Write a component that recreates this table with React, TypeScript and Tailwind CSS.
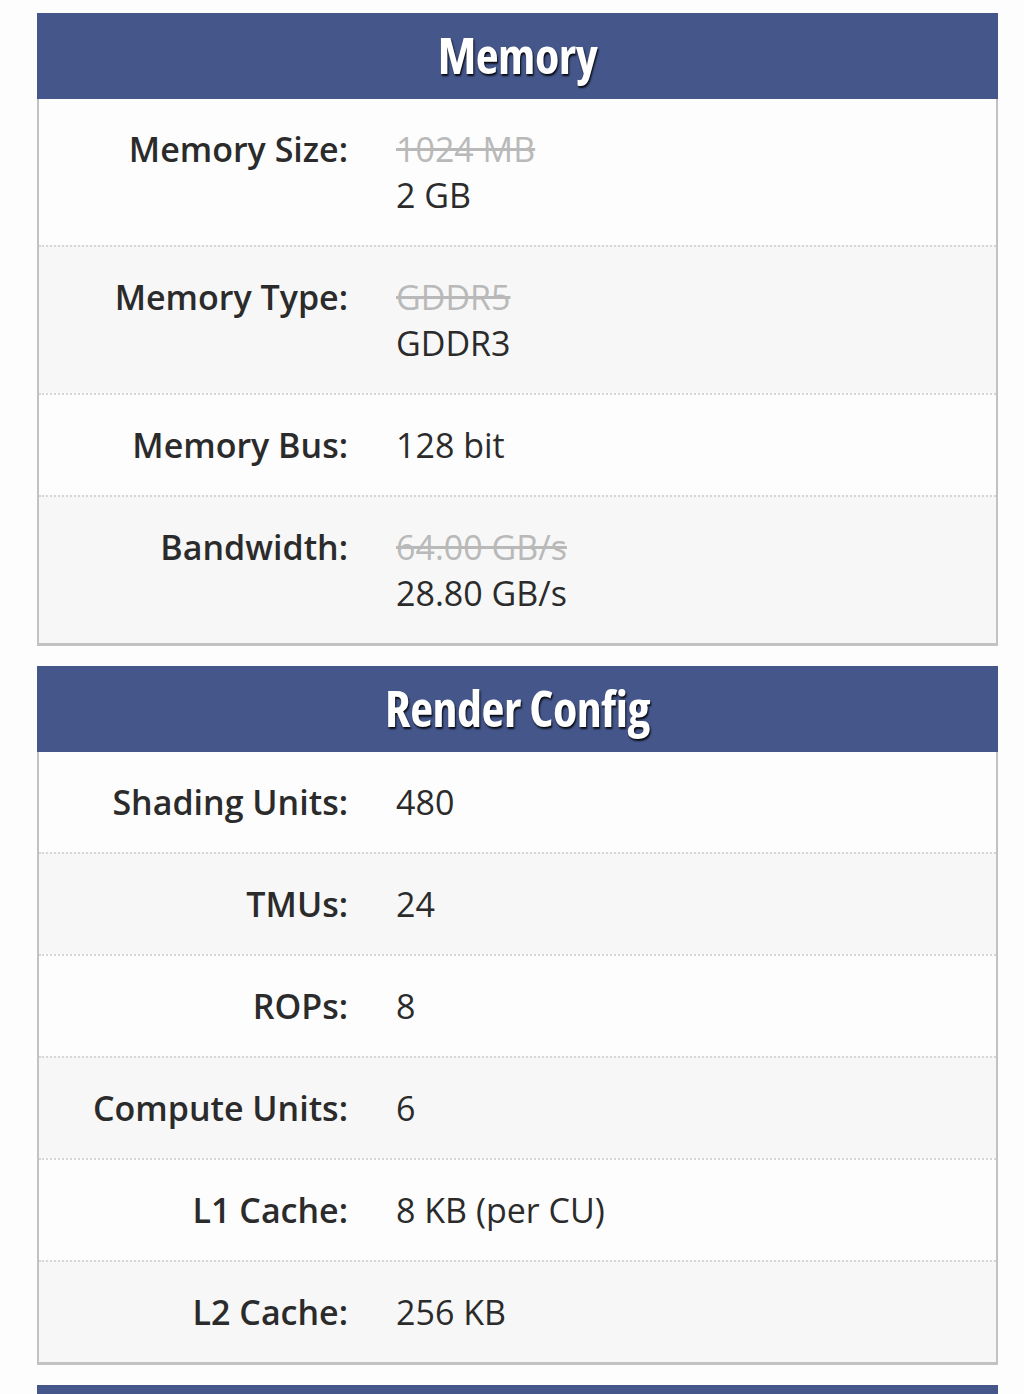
import React from "react";

type Row = { label: string; old?: string; value: string };

const memory: Row[] = [
  { label: "Memory Size:", old: "1024 MB", value: "2 GB" },
  { label: "Memory Type:", old: "GDDR5", value: "GDDR3" },
  { label: "Memory Bus:", value: "128 bit" },
  { label: "Bandwidth:", old: "64.00 GB/s", value: "28.80 GB/s" },
];

const render: Row[] = [
  { label: "Shading Units:", value: "480" },
  { label: "TMUs:", value: "24" },
  { label: "ROPs:", value: "8" },
  { label: "Compute Units:", value: "6" },
  { label: "L1 Cache:", value: "8 KB (per CU)" },
  { label: "L2 Cache:", value: "256 KB" },
];

function Header({ title }: { title: string }) {
  return (
    <div className="h-[86px] bg-[#44568a] flex items-center justify-center">
      <h2
        className="text-white font-bold text-[50px] leading-none font-stretch-condensed tracking-[-0.5px] -mt-[2px]"
        style={{ fontFamily: '"Open Sans", sans-serif', textShadow: "1px 2px 2px rgba(0,0,0,0.9)" }}
      >
        {title}
      </h2>
    </div>
  );
}

function Section({ title, rows }: { title: string; rows: Row[] }) {
  return (
    <section>
      <Header title={title} />
      <div className="border-x-2 border-b-[3px] border-[#c2c2c2]">
        {rows.map((r, i) => (
          <div
            key={r.label}
            className={`grid grid-cols-[309px_1fr] gap-x-[48px] py-[27px] ${i % 2 === 0 ? "bg-[#fdfdfd]" : "bg-[#f7f7f7]"} ${i > 0 ? "border-t-2 border-dotted border-[#d6d6d6]" : ""}`}
          >
            <div className="text-right font-semibold text-[34px] leading-[46px] text-[#2b2b2b]">{r.label}</div>
            <div className="text-[34px] leading-[46px] text-[#2b2b2b]">
              {r.old && <div className="line-through text-[#b9b9b9] decoration-[#b9b9b9]">{r.old}</div>}
              <div>{r.value}</div>
            </div>
          </div>
        ))}
      </div>
    </section>
  );
}

export default function App() {
  return (
    <div className="min-h-[1394px] bg-[#fdfdfd] pt-[13px] px-[37px] overflow-hidden" style={{ fontFamily: '"Open Sans", sans-serif' }}>
      <div className="w-[961px] flex flex-col gap-[20px]">
        <Section title="Memory" rows={memory} />
        <Section title="Render Config" rows={render} />
        <div className="h-[86px] bg-[#44568a]" />
      </div>
    </div>
  );
}
